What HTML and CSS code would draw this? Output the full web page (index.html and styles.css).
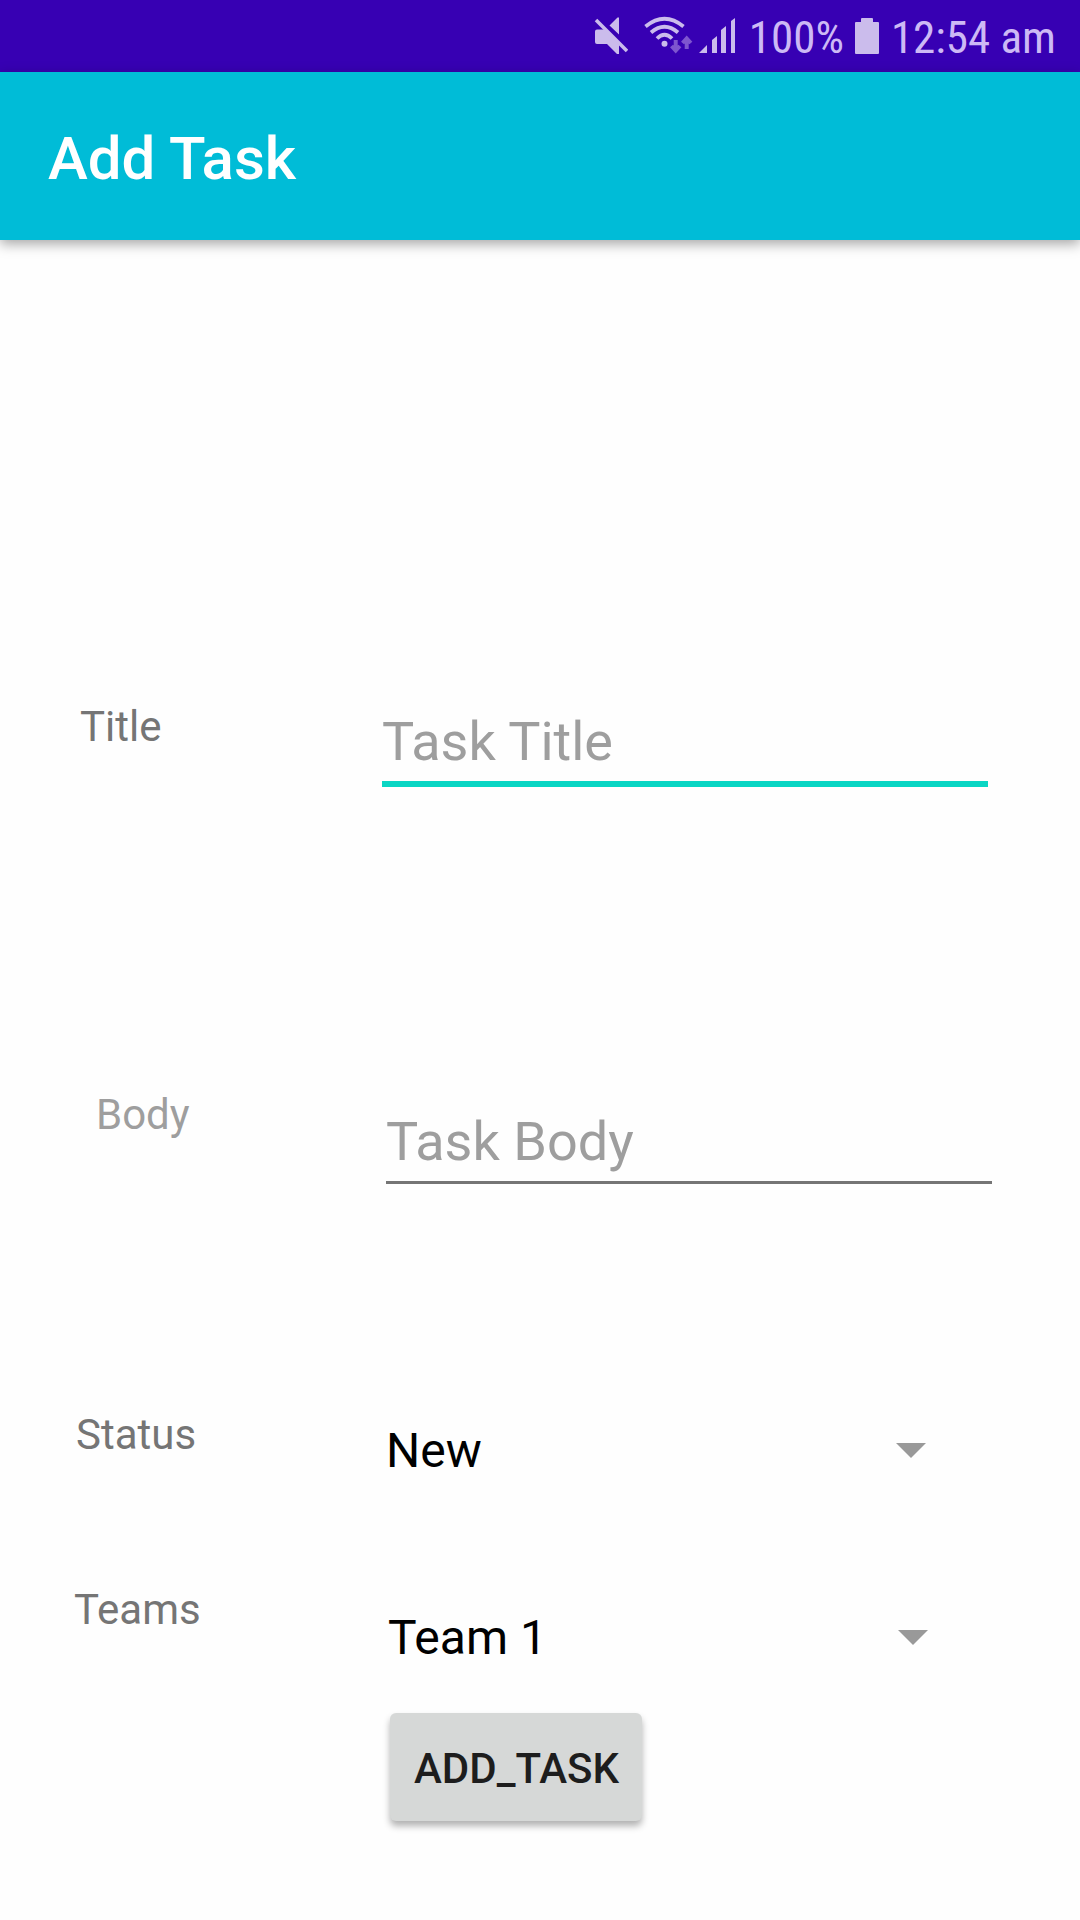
FILE: index.html
```html
<!DOCTYPE html>
<html lang="en">
<head>
  <meta charset="utf-8">
  <meta name="viewport" content="width=device-width, initial-scale=1">
  <title>Add Task</title>
  <link rel="stylesheet" href="styles.css">
</head>
<body>
  <div class="status-bar">
    <svg class="icon-mute" width="34" height="40" viewBox="0 0 34 40" aria-hidden="true">
      <path d="M3 13.500h8l14 15v9.500h-2L13 28H3q-2 0-2-2V15.500q0-2 2-2zM15.500 9.500l8-8h1.500v17z"/>
      <path d="M2 4l31 31" fill="none" stroke="#cbbcec" stroke-width="3.500"/>
    </svg>
    <svg class="icon-wifi" width="50" height="40" viewBox="0 0 50 40" aria-hidden="true">
      <g fill="none" stroke="#cbbcec" stroke-width="3.800">
        <path d="M1.500 10.500Q20.500-5 39.500 10.500"/>
        <path d="M7 16.500Q20.500 5 34 16.500"/>
        <path d="M13 22.500Q20.500 15 28 22.500"/>
      </g>
      <circle cx="20.500" cy="27.700" r="3"/>
      <g fill="none" stroke="#7e55cf" stroke-width="4">
        <path d="M31.700 24v11M27.500 30l4.200 4.500 4.200-4.500M42.700 33V22M38.500 27l4.200-4.500 4.200 4.500"/>
      </g>
    </svg>
    <svg class="icon-signal" width="36" height="36" viewBox="0 0 36 36" aria-hidden="true">
      <path d="M0 35l8-8v8zM13 35V22l5-4v17zM22 35V12l5-4v27zM32 35V3l4-3v35z"/>
    </svg>
    <span class="battery-level">100%</span>
    <svg class="icon-battery" width="24" height="36" viewBox="0 0 24 36" aria-hidden="true">
      <path d="M6 4V1q0-1 1-1h10q1 0 1 1v3h5q1 0 1 1v30q0 1-1 1H1q-1 0-1-1V5q0-1 1-1z"/>
    </svg>
    <span class="clock">12:54 am</span>
  </div>

  <header class="app-bar">
    <h1>Add Task</h1>
  </header>

  <main>
    <form class="task-form">
      <div class="row row-title">
        <label for="title">Title</label>
        <input class="field active" id="title" type="text" placeholder="Task Title">
      </div>
      <div class="row row-body">
        <label for="body">Body</label>
        <input class="field" id="body" type="text" placeholder="Task Body">
      </div>
      <div class="row row-status">
        <label for="status">Status</label>
        <div class="spinner">
          <select id="status"><option>New</option></select>
          <svg width="30" height="15" viewBox="0 0 30 15" aria-hidden="true"><path d="M0 0h30L15 15z"/></svg>
        </div>
      </div>
      <div class="row row-teams">
        <label for="teams">Teams</label>
        <div class="spinner">
          <select id="teams"><option>Team 1</option></select>
          <svg width="30" height="15" viewBox="0 0 30 15" aria-hidden="true"><path d="M0 0h30L15 15z"/></svg>
        </div>
      </div>
      <button class="submit" type="button">ADD_TASK</button>
    </form>
  </main>
</body>
</html>
```
FILE: styles.css
```css
* {
  box-sizing: border-box;
}

body {
  margin: 0;
  background: #fefefe;
  font-family: Roboto, "Noto Sans", sans-serif;
}

.status-bar {
  display: flex;
  align-items: center;
  justify-content: flex-end;
  height: 72px;
  padding-right: 24px;
  background: #3700b3;
  color: #cdb9f5;
  font-family: "Roboto Condensed", Roboto, sans-serif;
  font-size: 45px;
  line-height: 68px;
  white-space: nowrap;
}

.status-bar span {
  padding-top: 4px;
}

.status-bar svg {
  flex: none;
  fill: #cbbcec;
}

.icon-wifi {
  margin-left: 16px;
}

.icon-signal {
  margin-left: 5px;
}

.battery-level {
  margin-left: 14px;
}

.icon-battery {
  margin-left: 11px;
}

.clock {
  margin-left: 12px;
}

.app-bar {
  display: flex;
  align-items: center;
  height: 168px;
  padding: 5px 48px 0;
  background: #00bcd7;
  box-shadow: 0 4px 12px rgba(0, 0, 0, 0.35);
}

.app-bar h1 {
  margin: 0;
  color: #fff;
  font-size: 60px;
  font-weight: 500;
  line-height: 72px;
}

.task-form {
  padding: 463px 0 96px;
}

.row {
  display: grid;
  grid-template-columns: var(--field-start) 1fr;
  align-items: start;
  padding-right: var(--field-end);
}

.row label {
  padding-left: var(--label-start);
  color: #757575;
  font-size: 42px;
  line-height: 48px;
}

.row-title {
  --label-start: 80px;
  --field-start: 382px;
  --field-end: 92px;
}

.row-body {
  --label-start: 96px;
  --field-start: 386px;
  --field-end: 88px;
  margin-top: 304px;
}

.row-body label {
  color: #9e9e9e;
}

.row-body .field {
  margin-top: 9px;
}

.row-status {
  --label-start: 76px;
  --field-start: 386px;
  --field-end: 88px;
  margin-top: 227px;
}

.row-status .spinner {
  margin-top: 3px;
}

.row-teams {
  --label-start: 74px;
  --field-start: 388px;
  --field-end: 86px;
  margin-top: 100px;
}

.row-teams .spinner {
  margin-top: 15px;
}

.field {
  width: 100%;
  height: 84px;
  padding: 2px 0 0;
  border: 0;
  border-bottom: 3px solid #757575;
  border-radius: 0;
  outline: 0;
  background: transparent;
  color: #212121;
  font-family: inherit;
  font-size: 54px;
}

.field::placeholder {
  color: #9e9e9e;
  opacity: 1;
}

.field.active,
.field:focus {
  padding: 0 0 2px;
  border-bottom: 6px solid #0ad6c4;
}

.spinner {
  display: grid;
  align-items: center;
}

.spinner select,
.spinner svg {
  grid-area: 1 / 1;
}

.spinner select {
  width: 100%;
  height: 72px;
  padding: 0;
  border: 0;
  appearance: none;
  background: transparent;
  color: #000;
  font-family: inherit;
  font-size: 48px;
}

.spinner svg {
  justify-self: end;
  margin-right: 66px;
  fill: #999;
  pointer-events: none;
}

.submit {
  display: block;
  height: 108px;
  margin: 40px 0 0 390px;
  padding: 2px 23px 0 24px;
  border: 0;
  border-radius: 6px;
  background: #d6d8d7;
  box-shadow: 0 5px 7px rgba(0, 0, 0, 0.3);
  color: #1d1d1d;
  font-family: inherit;
  font-size: 42px;
  font-weight: 500;
}
```
